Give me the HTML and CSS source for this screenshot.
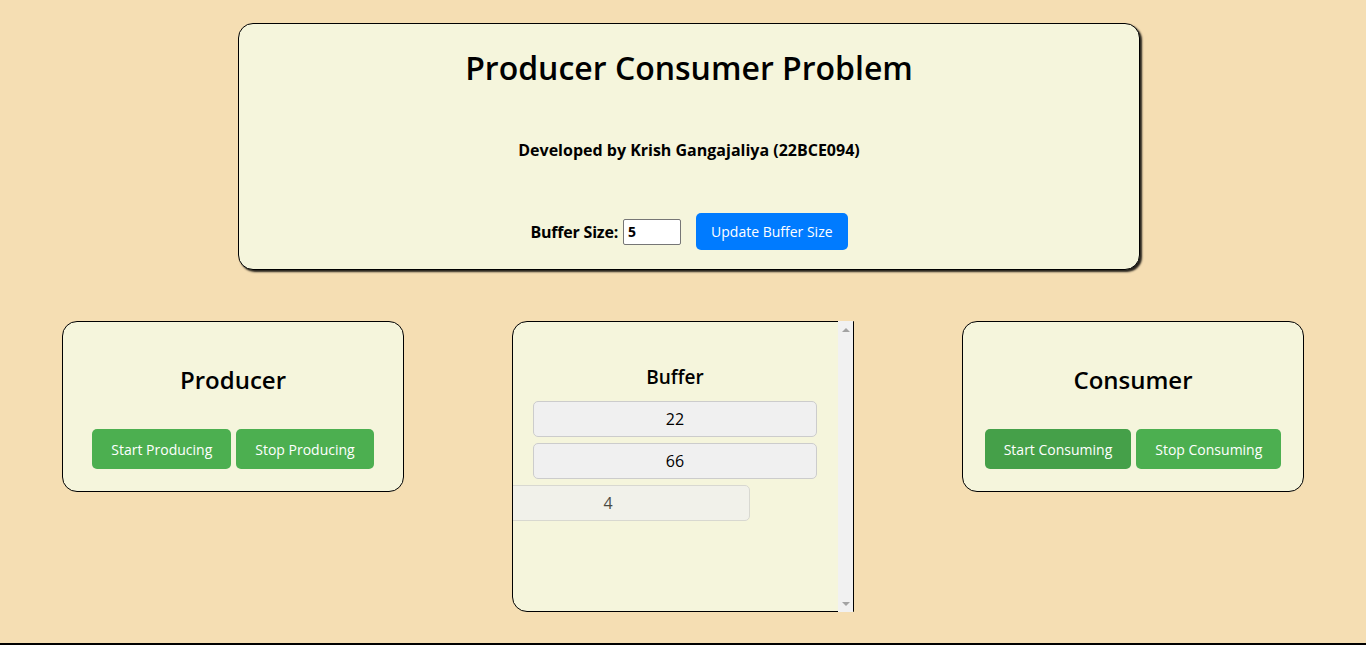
FILE: index.html
```html
<!DOCTYPE html>
<html lang="en">
<head>
<meta charset="utf-8">
<title>Producer Consumer Problem</title>
<link rel="stylesheet" href="styles.css">
</head>
<body>
<div class="header-wrap">
  <header class="header-card">
    <h1 class="title">Producer Consumer Problem</h1>
    <p class="subtitle">Developed by Krish Gangajaliya (22BCE094)</p>
    <div class="size-row">
      <label class="size-label" for="bs">Buffer Size:</label>
      <input id="bs" class="size-input" type="text" value="5">
      <button class="btn btn-blue">Update Buffer Size</button>
    </div>
  </header>
</div>
<main class="panels">
  <section class="panel">
    <h2 class="panel-title">Producer</h2>
    <div class="btn-row">
      <button class="btn btn-green">Start Producing</button>
      <button class="btn btn-green">Stop Producing</button>
    </div>
  </section>
  <section class="panel buffer">
    <div class="buffer-content">
      <h3 class="buffer-title">Buffer</h3>
      <div class="item">22</div>
      <div class="item">66</div>
      <div class="item leaving">4</div>
    </div>
    <div class="scrollbar">
      <span class="arrow arrow-up"></span>
      <span class="arrow arrow-down"></span>
    </div>
  </section>
  <section class="panel">
    <h2 class="panel-title">Consumer</h2>
    <div class="btn-row">
      <button class="btn btn-green btn-dark">Start Consuming</button>
      <button class="btn btn-green">Stop Consuming</button>
    </div>
  </section>
</main>
<footer class="footer"></footer>
</body>
</html>
```

FILE: styles.css
```css
html, body {
  margin: 0;
  padding: 0;
}

body {
  background: #f5deb3;
  font-family: "Open Sans", "Noto Sans", sans-serif;
  color: #000;
}

.header-wrap {
  display: flex;
  justify-content: center;
  padding: 23px 0 0 12px;
}

.header-card {
  width: 902px;
  box-sizing: border-box;
  border: 1px solid #000;
  border-radius: 15px;
  background: #f5f5dc;
  box-shadow: 2px 2px 2px rgba(0, 0, 0, 0.85);
  padding: 24px 20px 19px;
  display: flex;
  flex-direction: column;
  align-items: center;
}

.title {
  margin: 0;
  font-size: 32px;
  line-height: 40px;
  font-weight: 600;
}

.subtitle {
  margin: 52px 0 0;
  font-size: 16px;
  line-height: 20px;
  font-weight: bold;
}

.size-row {
  margin-top: 53px;
  display: flex;
  align-items: center;
  height: 37px;
}

.size-label {
  font-size: 16px;
  font-weight: bold;
  letter-spacing: -0.2px;
}

.size-input {
  margin-left: 5px;
  width: 58px;
  height: 26px;
  box-sizing: border-box;
  border: 1px solid #767676;
  border-radius: 2px;
  padding: 1px 4px;
  font-family: inherit;
  font-size: 14px;
  font-weight: bold;
  background: #fff;
}

.btn {
  border: 0;
  font-family: inherit;
  font-size: 14px;
  color: #fff;
  border-radius: 5px;
  cursor: pointer;
}

.btn-blue {
  margin-left: 15px;
  height: 37px;
  padding: 0 15px;
  background: #007bff;
}

.panels {
  margin-top: 51px;
  display: flex;
  align-items: flex-start;
  justify-content: space-between;
  padding: 0 62px 0 62px;
}

.panel {
  width: 342px;
  box-sizing: border-box;
  border: 1px solid #000;
  border-radius: 15px;
  background: #f5f5dc;
  padding: 43px 0 22px;
  display: flex;
  flex-direction: column;
  align-items: center;
}

.panel-title {
  margin: 0;
  font-size: 24px;
  line-height: 30px;
  font-weight: 600;
}

.btn-row {
  margin-top: 34px;
  display: flex;
  gap: 5px;
}

.btn-green {
  height: 40px;
  padding: 0 19px;
  background: #4caf50;
}

.btn-dark {
  background: #45a049;
}

.buffer {
  height: 291px;
  padding: 0;
  flex-direction: row;
  align-items: stretch;
  border-radius: 15px 0 0 15px;
}

.buffer-content {
  flex: 1;
  overflow: hidden;
  padding: 43px 21px 0 20px;
  border-radius: 14px 0 0 14px;
}

.scrollbar {
  width: 15px;
  margin: -1px 0;
  background: #f1f1f1;
  display: flex;
  flex-direction: column;
  justify-content: space-between;
  align-items: center;
  padding: 7px 0 6px;
  box-sizing: border-box;
}

.arrow {
  width: 0;
  height: 0;
  border-left: 4px solid transparent;
  border-right: 4px solid transparent;
}

.arrow-up {
  border-bottom: 4px solid #a3a3a3;
}

.arrow-down {
  border-top: 4px solid #a3a3a3;
}

.buffer-title {
  margin: 0 0 12px;
  font-size: 19px;
  line-height: 24px;
  font-weight: 600;
  text-align: center;
}

.item {
  height: 36px;
  box-sizing: border-box;
  border: 1px solid #ccc;
  border-radius: 5px;
  background: #f0f0f0;
  font-size: 16px;
  display: flex;
  align-items: center;
  justify-content: center;
  margin-bottom: 6px;
}

.leaving {
  transform: translateX(-67px);
  opacity: 0.7;
}

.footer {
  margin-top: 31px;
  border-top: 2px solid #000;
}
```
